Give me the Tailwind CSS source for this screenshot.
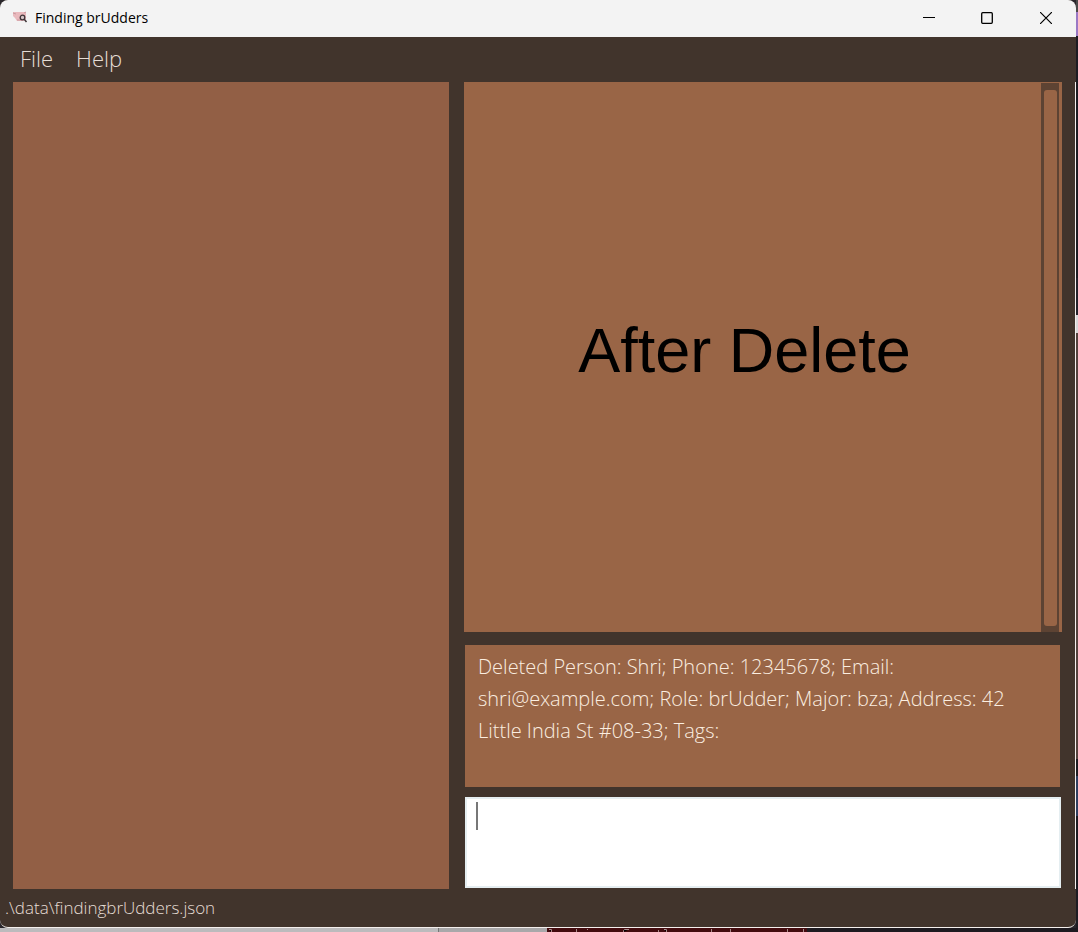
<!DOCTYPE html>
<html lang="en">
<head>
<meta charset="utf-8">
<meta name="viewport" content="width=device-width, initial-scale=1">
<title>Finding brUdders</title>
<script src="https://cdn.jsdelivr.net/npm/@tailwindcss/browser@4"></script>
</head>
<body class="grid h-screen grid-cols-[minmax(0,1fr)_2px] grid-rows-[minmax(0,1fr)_4px] overflow-hidden bg-[#29262b] font-['Open_Sans',sans-serif]">
  <div class="flex min-h-0 flex-col overflow-hidden rounded-lg border-b border-[#f4efed] bg-[#41342c]">
    <header class="flex h-[37px] shrink-0 items-center bg-[#f3f3f3] pb-px pl-3 text-black">
      <svg class="h-4 w-4" viewBox="0 0 16 16" fill="none" aria-hidden="true">
        <path d="M1 2h13v7l-2 2H5L3 8 1 6z" fill="#e9b9bd"/>
        <path d="M1 3l3 1M12 3l2-1M5 10h5" stroke="#c99a9f"/>
        <circle cx="10.500" cy="7.500" r="2.300" fill="#d5c5c7" stroke="#3f3639" stroke-width="1.300"/>
        <path d="M12 9l2.500 3" stroke="#3f3639" stroke-width="1.500"/>
      </svg>
      <h1 class="ml-[7px] flex-1 text-sm">Finding brUdders</h1>
      <button class="flex h-full w-[58px] items-center justify-center" aria-label="Minimize">
        <svg class="h-3 w-3" viewBox="0 0 12 12" stroke="#000"><path d="M0 5.500h12"/></svg>
      </button>
      <button class="flex h-full w-[58px] items-center justify-center" aria-label="Maximize">
        <svg class="h-3 w-3" viewBox="0 0 12 12" fill="none" stroke="#000" stroke-width="1.300"><rect x=".7" y=".7" width="10.600" height="10.600" rx="1"/></svg>
      </button>
      <button class="flex h-full w-[60px] items-center justify-center" aria-label="Close">
        <svg class="h-3 w-3" viewBox="0 0 12 12" stroke="#000" stroke-width="1.200"><path d="M0 0l12 12M12 0L0 12"/></svg>
      </button>
    </header>
    <nav class="flex h-[45px] shrink-0 items-center gap-[23px] pb-[2px] pl-5 text-[22px] font-light text-[#e6ddd5]">
      <button>File</button>
      <button>Help</button>
    </nav>
    <main class="grid min-h-0 flex-1 grid-cols-[436fr_598fr] gap-[15px] border-r border-[#f4efed] pr-[13px] pl-[13px]">
      <section class="bg-[#925f45]" aria-label="Person list"></section>
      <div class="flex min-h-0 flex-col">
        <section class="flex min-h-0 flex-1 bg-[#996546]" aria-label="Details">
          <div class="flex flex-1 items-center justify-center pr-4 pb-[14px]">
            <p class="font-['Liberation_Sans',sans-serif] text-[63px] leading-none text-black">After Delete</p>
          </div>
          <div class="mt-px mr-[3px] flex w-[18px] bg-[#5d4333] pt-[7px] pr-[2px] pb-[6px] pl-[3px]">
            <div class="flex-1 rounded-[3px] bg-[#996546]"></div>
          </div>
        </section>
        <output class="mt-[13px] mr-[2px] ml-px block h-[142px] shrink-0 bg-[#996546] px-[13px] pt-[6px] text-[20px] leading-8 font-light text-[#fbeee0]">Deleted Person: Shri; Phone: 12345678; Email: shri@example.com; Role: brUdder; Major: bza; Address: 42 Little India St #08-33; Tags:</output>
        <div class="relative mt-[10px] mr-px mb-px ml-px flex h-[91px] shrink-0">
          <textarea class="flex-1 resize-none border-2 border-[#e5eef1] bg-white px-[10px] py-1 text-[20px] font-light text-black outline-none" aria-label="Command"></textarea>
          <span class="absolute top-[5px] left-[11px] h-7 w-[2px] bg-[#777]"></span>
        </div>
      </div>
    </main>
    <footer class="flex h-[38px] shrink-0 items-center pl-[5px] text-[17px] font-light text-[#e6ddd5]">.\data\findingbrUdders.json</footer>
  </div>
  <!-- Sliver of the desktop behind the window -->
  <div class="grid grid-rows-[12fr_24fr_242fr_37fr_18fr_245fr_180fr_17fr_40fr_112fr]">
    <div class="bg-[#4a4a4a]"></div><div class="bg-[#9a78c4]"></div><div class="bg-[#1d1c22]"></div><div class="bg-[#24222a]"></div><div class="bg-[#d8d6d8]"></div><div class="bg-[#54423d]"></div><div class="bg-[#54423d]"></div><div class="bg-[#1d1c22]"></div><div class="bg-[#2f3f60]"></div><div class="bg-[#1d1c22]"></div>
  </div>
  <div class="col-span-2 grid grid-cols-[438fr_1px_108fr_260fr_271fr]">
    <div class="bg-[#bcbbbd]"></div><div class="bg-[#777]"></div><div class="bg-[#a9a8aa]"></div>
    <svg class="h-1 w-full bg-[#430b0e]" viewBox="0 0 260 4" preserveAspectRatio="none" stroke="#a88a8a" aria-hidden="true"><path d="M2 1.500h2.500V4M29.500 1v3M40.500 1v1M76.500 4V2.500l1-1H82M111.500 2v2M117 1.500h2.500V4M164.500 1v3M183.500 1v3M240.500 1v3M256.500 1v3"/></svg>
    <div class="bg-[#1d1a20]"></div>
  </div>
</body>
</html>
